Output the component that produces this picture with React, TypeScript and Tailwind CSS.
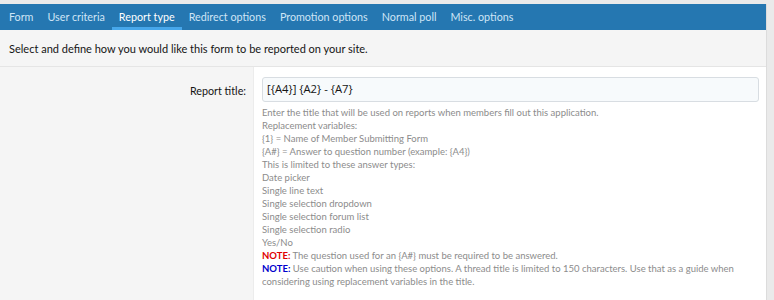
const tabs = [
  "Form",
  "User criteria",
  "Report type",
  "Redirect options",
  "Promotion options",
  "Normal poll",
  "Misc. options",
];

const hintLines = [
  "Enter the title that will be used on reports when members fill out this application.",
  "Replacement variables:",
  "{1} = Name of Member Submitting Form",
  "{A#} = Answer to question number (example: {A4})",
  "This is limited to these answer types:",
  "Date picker",
  "Single line text",
  "Single selection dropdown",
  "Single selection forum list",
  "Single selection radio",
  "Yes/No",
];

export default function App() {
  return (
    <div
      className="h-[300px] w-[774px] overflow-hidden bg-[#eaeaea] pt-[4px] pr-[7px]"
      style={{ fontFamily: 'Lato, "Open Sans", sans-serif' }}
    >
      <div className="border-r border-[#dcdcdc] bg-white">
        <nav className="flex h-[26px] items-stretch bg-[#2577b1] pl-[2px]">
          {tabs.map((tab) => {
            const active = tab === "Report type";
            return (
              <div
                key={tab}
                className={
                  active
                    ? "flex items-center border-b-[3px] border-[#47a7eb] px-[7px] pt-[3px] text-[10.75px] text-white"
                    : "flex items-center border-b-[3px] border-transparent px-[7px] pt-[3px] text-[10.75px] text-[#cfe5f6]"
                }
              >
                {tab}
              </div>
            );
          })}
        </nav>

        <div className="flex h-[37px] items-center border-b border-[#e5e5e5] bg-[#f5f5f5] px-[9px] pt-[3px] text-[11px] text-[#141414]">
          Select and define how you would like this form to be reported on your site.
        </div>

        <div className="flex">
          <div className="w-[253px] shrink-0 bg-[#f5f5f5] pt-[16px] pr-[7px] text-right text-[10.75px] text-[#141414]">
            Report title:
          </div>
          <div className="flex-1 border-l border-[#ececec] pt-[10px] pr-[7px] pl-[8px]">
            <div className="flex h-[25px] items-center rounded-[3px] border border-[#d8dde2] bg-[#f7fafc] px-[4px] font-['Open_Sans',sans-serif] text-[11.25px] text-[#141414]">
              {"[{A4}] {A2} - {A7}"}
            </div>
            <div className="pt-[4px] pb-[20px] text-[9.5px] leading-[13px] text-[#8c8c8c]">
              {hintLines.map((line) => (
                <div key={line}>{line}</div>
              ))}
              <div>
                <span className="font-bold text-[#e00000]">NOTE:</span> The question used for an {"{A#}"} must be required to be answered.
              </div>
              <div>
                <span className="font-bold text-[#0000cc]">NOTE:</span> Use caution when using these options. A thread title is limited to 150 characters. Use that as a guide when considering using replacement variables in the title.
              </div>
            </div>
          </div>
        </div>
      </div>
    </div>
  );
}
